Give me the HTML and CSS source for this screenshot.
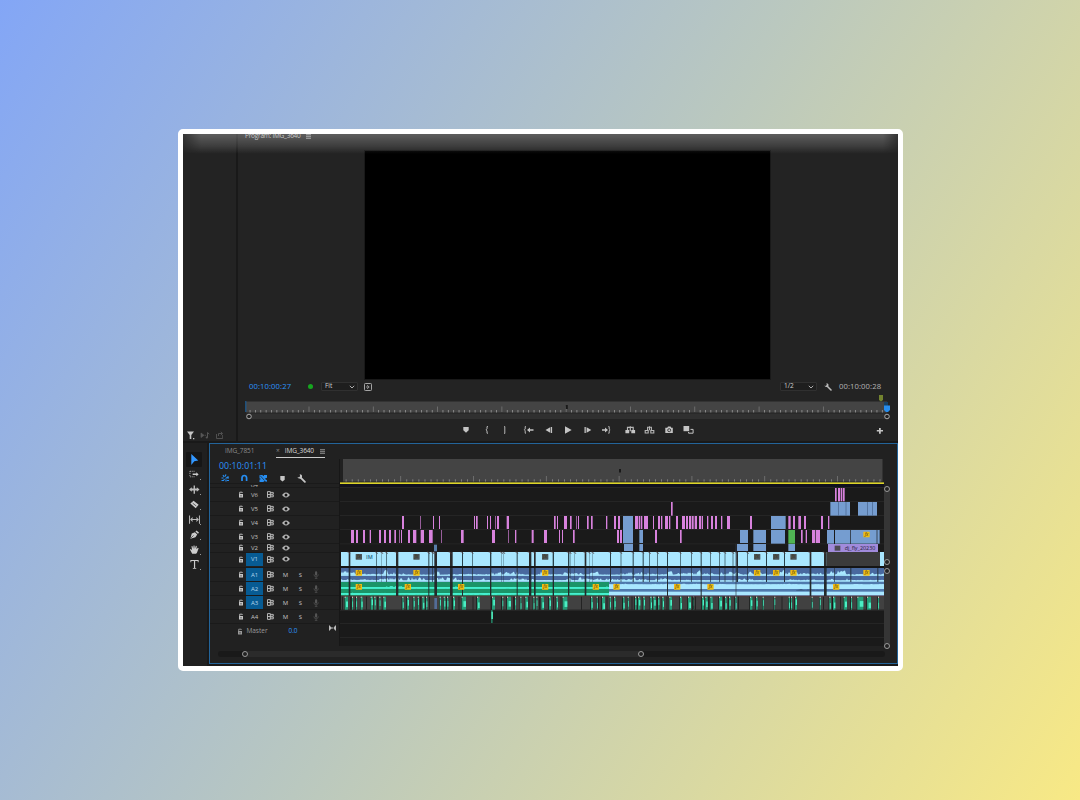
FILE: index.html
```html
<!DOCTYPE html>
<html lang="en">
<head>
<meta charset="utf-8">
<title>Program: IMG_3640</title>
<link rel="stylesheet" href="styles.css">
</head>
<body>
<svg class="defs" aria-hidden="true">
  <symbol id="lock" viewBox="0 0 6 7"><path d="M1 3h4v3.5H1z" fill="currentColor"/><path d="M1.7 3V1.2h2.5V2" fill="none" stroke="currentColor" stroke-width=".9"/><path d="M3 4v1.5" stroke="#222" stroke-width=".7"/></symbol>
  <symbol id="sync" viewBox="0 0 7 7"><path d="M.5.6h2.8v5.8H.5zM.5 3.500h2.8M3.3 1.4h3v1.8h-3M3.3 4h3v1.8h-3" fill="none" stroke="currentColor" stroke-width=".9"/></symbol>
  <symbol id="eye" viewBox="0 0 8 6"><path d="M.4 3Q4-1.4 7.6 3 4 7.4.4 3z" fill="currentColor" stroke="currentColor" stroke-width=".6"/><circle cx="4" cy="3" r="1.500" fill="#181818"/></symbol>
  <symbol id="mic" viewBox="0 0 6 8"><rect x="2" y=".3" width="2.2" height="4.4" rx="1.1" fill="currentColor"/><path d="M.9 3.4Q1 5.8 3.1 5.8T5.3 3.4M3.1 5.8v1.6M1.8 7.4h2.6" fill="none" stroke="currentColor" stroke-width=".7"/></symbol>
  <symbol id="wrench" viewBox="0 0 8 8"><path d="M3 3l4 4" stroke="currentColor" stroke-width="1.6" stroke-linecap="round"/><path d="M2.4.3A2.2 2.2 0 0 1 4.4 3 2.2 2.2 0 0 1 .4 2.6L2 3l.8-1z" fill="currentColor"/></symbol>
  <symbol id="chev" viewBox="0 0 6 4"><path d="M.8.8L3 3 5.2.8" fill="none" stroke="currentColor" stroke-width=".8"/></symbol>
</svg>
<main class="window">
  <section class="upper">
    <aside class="bin">
      <svg width="36" height="9" viewBox="0 0 36 9"><path d="M0 .5h7L4.3 4v4H2.7V4zM6 7h1.3v1.3H6z" fill="#c6c6c6"/><path d="M14 2v4.500L17 4.300zM17.500 4.300h1.500" fill="#565656" stroke="#565656" stroke-width=".7"/><path d="M20.500 6.500V1.500l1.800 1.600" fill="none" stroke="#565656"/><circle cx="19.800" cy="6.500" r="1.100" fill="#565656"/><path d="M29.500 3v4.500h6.200V4M31.500 5V2.500h3.500M33.800.8l1.800 1.700-1.800 1.600" fill="none" stroke="#565656" stroke-width=".9"/></svg>
    </aside>
    <div class="program">
      <header class="program-tab">Program: IMG_3640 <i class="menu"></i></header>
      <div class="monitor"></div>
      <div class="info">
        <span class="tc blue">00:10:00:27</span><i class="dot"></i>
        <span class="select fit">Fit<svg width="6" height="4"><use href="#chev"/></svg></span>
        <svg class="insert" width="8" height="8" viewBox="0 0 8 8"><rect x=".5" y=".5" width="7" height="7" rx=".8" fill="none" stroke="#a5a5a5"/><path d="M3 2.200L5.200 4 3 5.800M2 4h2.500" fill="none" stroke="#bbb" stroke-width=".7"/></svg>
        <span class="select res">1/2<svg width="6" height="4"><use href="#chev"/></svg></span>
        <svg class="wr" width="8" height="8"><use href="#wrench"/></svg>
        <span class="tc grey">00:10:00:28</span>
      </div>
      <svg class="pruler" id="pruler" width="648" height="27" viewBox="243 393 648 27"></svg>
      <div class="transport">
        <svg width="430" height="14" viewBox="460 423 430 14" fill="#c4c4c4" stroke="none">
          <path d="M463.300 427h5.400v3.200l-2.700 2.500-2.700-2.500z"/>
          <path d="M488 426.600h-1v2.300l-1 1 1 1v2.300h1M504 426.600h.8v6.800h-.8M526 426.600h-.8v2.400l-.9.900.9.900v2.400h.8M608.300 426.600h.9v2.400l.9.900-.9.900v2.400h-.9" fill="none" stroke="#b6b6b6" stroke-width="1"/>
          <path d="M527 430l3-2.500v1.800h3.500v1.400H530v1.800zM608 430l-3-2.500v1.800h-3v1.400h3v1.800z"/>
          <path d="M545.500 430l4.700-2.800v5.600zM550.800 427h1.300v6h-1.300zM565 426.300l6.700 3.700-6.700 3.700zM584.500 427h1.300v6h-1.300zM586.600 427.200l4.700 2.800-4.700 2.800z"/>
          <path d="M625.400 430h3.800v3.200h-3.800zM631.300 430h3.800v3.200h-3.800z"/>
          <path d="M627.500 430v-2.700h5.700v2.700M630.300 426.300v5" fill="none" stroke="#b6b6b6" stroke-width="1.200"/>
          <path d="M645.200 430.500h3v2.500h-3zM650.800 430.500h3v2.500h-3zM647.600 430v-2.700h3.800v2.700M649.500 426.200v4" fill="none" stroke="#b6b6b6" stroke-width="1.100"/>
          <path d="M665.300 427.700h2l.7-1.200h2.600l.7 1.200h1.500v5.300h-7.500z"/><circle cx="669.200" cy="430.200" r="1.500" fill="none" stroke="#222" stroke-width=".8"/>
          <path d="M683.500 426h5.700v5.200h-5.700z"/><path d="M690.500 429.400h2.600v3.800h-4.500V432" fill="none" stroke="#c4c4c4" stroke-width="1"/>
          <path d="M879 427.900h1.800v2.100h2.200v1.500h-2.200v2.300H879v-2.300h-2.200v-1.500h2.200z"/>
        </svg>
      </div>
    </div>
  </section>
  <section class="lower">
    <nav class="tools">
      <span class="tool active"><svg width="12" height="12" viewBox="0 0 12 12"><path d="M2.500 0l7.600 7-4.300.8L2.500 12z" fill="#3297ff"/></svg></span>
      <span class="tool"><svg width="12" height="12" viewBox="0 0 12 12"><path d="M1 2.500h6M1 2.500v6h6" fill="none" stroke="#bbb" stroke-dasharray="1 1"/><path d="M4 5h4V3.500L10.500 6 8 8V6.600H4z" fill="#ccc"/></svg></span>
      <span class="tool"><svg width="12" height="12" viewBox="0 0 12 12"><path d="M0 6l3-2.500V5h2V1.500h1.500V5h2V3.500l3 2.500-3 2.500V7h-2v3.500H5V7H3v1.500z" fill="#bbb"/></svg></span>
      <span class="tool"><svg width="12" height="12" viewBox="0 0 12 12"><path d="M1.500 4.800L5 1.800l5.500 4.500L7.300 10z" fill="#ccc"/><path d="M4 4.500l4 3.200" stroke="#333" stroke-width=".8"/></svg></span>
      <span class="tool"><svg width="12" height="12" viewBox="0 0 12 12"><path d="M.6 1.500v9M11.400 1.500v9M2 6h8M4 4L2 6l2 2M8 4l2 2-2 2" fill="none" stroke="#bbb" stroke-width="1.100"/></svg></span>
      <span class="tool"><svg width="12" height="12" viewBox="0 0 12 12"><path d="M1.500 10.500L3 5l3.500-1.500L9 6l-2 3zM7 2.800L8.300 1.500 11 4 9.700 5.300z" fill="#ccc"/><path d="M2 10l3-3" stroke="#222" stroke-width=".7"/></svg></span>
      <span class="tool"><svg width="12" height="12" viewBox="0 0 12 12"><path d="M3.500 10.500L1 6l1-.6 1.400 1.300L2.700 2.500l1-.2.900 3L5 1.500h1l.4 3.600L7.500 2l1 .3-.4 3.500L9.700 4l.8.500-1.800 5-1 1z" fill="#ccc"/></svg></span>
      <span class="tool"><svg width="12" height="12" viewBox="0 0 12 12"><path d="M1.500 1h9v2.500h-1V2.200H6.700v7.500h1.200v.8H4.200v-.8h1.200V2.200H2.500v1.300h-1z" fill="#ccc"/></svg></span>
    </nav>
    <div class="timeline">
      <header class="tabs"><span class="tab">IMG_7851</span><span class="tab current"><b>×</b>IMG_3640<i class="menu"></i></span></header>
      <div class="body">
        <div class="heads">
          <div class="tc seq">00:10:01:11</div>
          <svg class="opts" width="90" height="12" viewBox="218 472 90 12">
            <path d="M221.500 480.500h2l1-1.500M221.500 478h2M226 474.500l-1 2M223 475l1.200 2M228.500 476.500l-2 1.500h2.500M226 479.500v2M227 480.500h2" fill="none" stroke="#268df1" stroke-width="1.200"/>
            <path d="M242 481v-3.200q.2-2.300 2.300-2.300t2.300 2.300v3.200" fill="none" stroke="#268df1" stroke-width="1.700"/>
            <path d="M259.500 475h3.300v1h1v-1h3.200v2.800l-2.300 1 2.300 1.500v1.500l-3.200-.8v1h-4.300v-2.500h1v-1h-1z" fill="#268df1"/><path d="M260 475.500l4.500 5" stroke="#222" stroke-width=".7"/>
            <path d="M280.300 476h4.400v3.700l-2.200 1.800-2.200-1.800z" fill="#c6c6c6"/>
            <use href="#wrench" x="297" y="474" width="9" height="9" color="#c6c6c6"/>
          </svg>
          <div id="heads"></div>
        </div>
        <div class="lanes">
          <svg id="truler" width="546" height="25" viewBox="340 459 546 25"></svg>
          <svg id="tracks" width="546" height="162" viewBox="0 0 1638 486"></svg>
        </div>
        <div class="vbars"><i class="vbar v"></i><i class="vbar a"></i></div>
      </div>
      <div class="hscroll"><i class="thumb"></i></div>
    </div>
  </section>
</main>
<script src="timeline.js"></script>
</body>
</html>
```
FILE: styles.css
```css
*, *::before, *::after { box-sizing: border-box; }
body { margin: 0; width: 1080px; height: 800px; padding: 129px 0 0 178px; overflow: hidden; background: linear-gradient(122deg, #83a6f6 0%, #bac8bf 50%, #f8e985 100%); font: 500 6.5px/1 "Open Sans", "Noto Sans", sans-serif; color: #c4c4c4; }
svg { display: block; flex: none; }
.defs { position: absolute; width: 0; height: 0; }
.window { position: relative; width: 725px; height: 542px; border: 5px solid #fff; border-radius: 5px; background: #191919; overflow: hidden; }
.window::after { content: ""; position: absolute; inset: 0; pointer-events: none; background: linear-gradient(rgba(255,255,255,.27), rgba(255,255,255,.12) 12px, transparent 20px); mask-image: linear-gradient(90deg, rgba(0,0,0,.3), #000 18px, #000 700px, rgba(0,0,0,.3)); }
.upper { display: flex; height: 307px; background: #232323; }
.bin { display: flex; align-items: flex-end; width: 55px; padding: 0 0 1px 3.500px; border-right: 2px solid #191919; }
.program { width: 660px; }
.program-tab { display: flex; height: 16px; padding-left: 7px; font-size: 6.500px; line-height: 4px; letter-spacing: -.25px; color: #bbb; }
.menu { display: inline-block; width: 5px; height: 5px; margin-left: 5px; background: repeating-linear-gradient(#777 0 1px, #444 1px 2px); }
.monitor { width: 407px; height: 230px; margin-left: 126px; background: #000; border: 1px solid #191919; }
.info { display: flex; align-items: center; height: 13px; padding-left: 11px; }
.tc { font-size: 7.700px; letter-spacing: .08px; white-space: nowrap; }
.blue { width: 59px; color: #2b94fb; }
.dot { width: 5px; height: 5px; border-radius: 50%; background: #16a51f; margin-right: 8px; }
.select { display: flex; align-items: center; justify-content: space-between; height: 9px; padding: 0 2px 0 3px; border: 1px solid #303030; border-radius: 1px; background: #1e1e1e; color: #d0d0d0; font-size: 6.5px; }
.fit { width: 37px; margin-right: 6px; }
.res { width: 37px; margin-left: 408px; }
.wr { margin: 0 7px; color: #bbb; }
.grey { color: #b4b4b4; }
.pruler { margin-left: 5px; }
.transport { padding: 3px 0 0 222px; }
.lower { display: flex; height: 225px; margin-top: 2px; }
.tools { width: 24px; padding: 9px 0 0 3px; background: #202020; }
.tool { position: relative; display: flex; align-items: center; justify-content: center; width: 16px; height: 15px; }
.tool svg { width: 11px; height: 11px; }
.tool.active { background: #161616; border-radius: 1px; }
.tool:not(.active)::after { content: ""; position: absolute; right: 1px; bottom: 2px; width: 1px; height: 1px; background: #999; }
.timeline { width: 689px; height: 221px; margin-left: 2px; border: 1px solid #23649a; background: #212121; }
.tabs { display: flex; height: 15px; padding: 2px 0 0 15px; }
.tab { height: 12px; line-height: 10px; color: #8b8b8b; width: 51px; letter-spacing: -.1px; }
.current { display: flex; width: 49px; color: #d8d8d8; border-bottom: 1px solid #ccc; }
.current b { width: 10px; color: #888; font-weight: 400; }
.current .menu { margin: 3px 0 0 6px; flex: none; }
.body { display: flex; height: 187px; }
.heads { width: 130px; height: 187px; border-right: 1px solid #171717; }
.seq { height: 13px; padding: 3px 0 0 9px; color: #2b94fb; font-size: 8.800px; }
.opts { margin-left: 8px; }
#heads { margin-top: -1px; }
.row { display: grid; grid-template-columns: 25px 11px 17px 15px 15px 15px 15px; align-items: center; height: 14px; border-top: 1px solid #1a1a1a; color: #c4c4c4; font-size: 6px; }
.row svg { justify-self: center; }
.row span { align-self: stretch; display: flex; align-items: center; justify-content: center; }
.row .on { background: #075b93; color: #b5d7ee; }
.row .mic { color: #555; }
.row:first-child { height: 4px; overflow: hidden; align-items: end; }
.short { height: 8.500px; }
.v1 { height: 14.500px; margin-bottom: 1px; }
.master { grid-template-columns: 25px 10px 24px 48px 9px 13px; padding-top: 1px; color: #999; font-size: 6.500px; }
.master svg:last-child { margin-top: -6px; }
.master .gain { color: #2b94fb; }
.lanes { width: 544px; background: #1b1b1b; overflow: hidden; }
.vbars { width: 7px; padding: 27px 0 0 0; }
.vbar { display: block; position: relative; width: 6px; height: 79px; margin-bottom: 3px; border-radius: 3px; background: #353535; }
.vbar::before, .vbar::after, .thumb::before, .thumb::after { content: ""; position: absolute; width: 6px; height: 6px; border: 1.500px solid #999; border-radius: 50%; background: #222; }
.vbar::before { top: 0; }
.vbar::after { bottom: 0; }
.vbar.a { height: 81px; }
.hscroll { height: 6px; width: 667px; margin: 5px 0 0 8px; padding-left: 24px; border-radius: 3px; background: #191919; }
.thumb { display: block; position: relative; width: 402px; height: 6px; border-radius: 3px; background: #2b2b2b; }
.thumb::before { left: 0; }
.thumb::after { right: 0; }
```
FILE: timeline.js
```js
const rect = (x, y, w, h, f, extra = "") => `<rect x="${x}" y="${y}" width="${w}" height="${h}" fill="${f}" ${extra}/>`;
const icon = (id, w, h, cls = "") => `<svg class="${cls}" width="${w}" height="${h}"><use href="#${id}"/></svg>`;

// Track headers
const names = ["V7", "V6", "V5", "V4", "V3", "V2", "V1", "A1", "A2", "A3", "A4"];
document.getElementById("heads").innerHTML = names.map(n => {
  const on = ["V1", "A1", "A2", "A3"].includes(n) ? "on" : "";
  const cls = n === "V1" ? "v1" : n === "V2" ? "short" : "";
  if (n === "V7") return `<div class="row"><i></i><i></i><span>V7</span></div>`;
  return `<div class="row ${cls}"><i></i>${icon("lock", 6, 7)}<span class="${on}">${n}</span>${icon("sync", 7, 7)}` +
    (n[0] === "V" ? icon("eye", 8, 6) : `<span>M</span><span>S</span>${icon("mic", 6, 8, "mic")}`) + `</div>`;
}).join("") + `<div class="row master"><i></i>${icon("lock", 6, 7)}<span>Master</span><span class="gain">0.0</span><i></i><svg width="7" height="6"><path d="M0 0l3 3-3 3zM7 0L4 3l3 3zM2 2.500h3v1H2z" fill="#bbb"/></svg></div>`;

// Program ruler
let s = rect(246, 402, 641, 10.5, "#444") + rect(246, 401, 641, 1, "#333") + rect(246, 413.5, 641, 5.5, "#303030");
for (let i = 1; i < 120; i++) {
  const x = 244.3 + i * 5.358, major = i % 12 === 0;
  if (x < 884) s += rect(x, major ? 406.5 : 410, .8, major ? 5.5 : 2.5, major ? "#777" : "#999");
}
s += rect(245.3, 401, 1, 11, "#1c65a5") + rect(565.8, 405, 2, 4, "#191919") + rect(884, 402, 4, 5, "#164164");
s += `<circle cx="249" cy="416.500" r="2.300" fill="#222" stroke="#aaa"/><circle cx="887" cy="416.500" r="2.300" fill="#222" stroke="#aaa"/>`;
s += `<path d="M879 395h4v5l-2 1.500-2-1.500z" fill="#73832f"/><path d="M884 405.500h6v4.500l-2 2h-2l-2-2z" fill="#278eee"/>`;
document.getElementById("pruler").innerHTML = s;

// Sequence ruler
s = rect(340, 459, 546, 26, "#212121") + rect(343, 459, 539.5, 22, "#444") + rect(343, 481, 539.5, 1.5, "#353535");
for (let i = 3; i < 92; i++) {
  const x = 327.500 + i * 6.067, major = i % 12 === 0;
  s += rect(x, major ? 476 : 479.3, .8, major ? 5.5 : 2.3, major ? "#777" : "#8b8b8b");
}
s += rect(619, 469, 2, 3.5, "#191919") + rect(340, 482.4, 544, 1.600, "#dcd42b");
document.getElementById("truler").innerHTML = s;

// Clips: three units per pixel; each list holds "start-end" ranges after an offset
const C = { pink: "#d882dd", blue: "#759dd0", cyan: "#a9e7ff" };
s = rect(0, 0, 1638, 486, "#1a1a1a") + rect(0, 0, 1638, 9, "#11111d");
[9, 51, 93, 135, 178, 378, 417, 459].forEach(y => s += rect(0, y, 1638, 3, "#252525"));
const clips = (list, off, y, h, f) => list.split(",").forEach(r => {
  const [a, b] = r.split("-").map(Number);
  s += rect(off + a, y, b - a, h, f);
});
clips("186-192,240-242,279-282,297-300,402-405,408-413", 0, 96, 39, C.pink);
clips("33-42,48-54,69-75,89-93,117-123,132-138,147-153,163-168,178-180,183-186,204-210,219-229,242-252,267-278,303-305,363-371", 0, 138, 39, C.pink);
clips("21-24,30-33,45-47,51-57,80-87,222-227,231-234,252-261,270-275,288-290,294-297,321-326,333-338,378-382,402-408,414-420", 420, 96, 39, C.pink);
clips("36-45,85-87,105-109,155-161,192-201,237-240,246-249,279-284,411-417", 420, 138, 39, C.pink);
clips("153-158", 840, 54, 41, C.pink);
clips("45-54,56-60,62-67,72-84,99-102,114-120,123-127,135-144,147-151,168-174,186-195,198-204,207-214,216-221,224-231,237-243,245-249,261-265,273-279,285-291,303-307,321-330,390-396", 840, 96, 39, C.pink);
clips("0-6,105-111,180-185", 840, 138, 39, C.pink);
clips("225-230,234-240,242-246,248-254", 1260, 12, 40, C.pink);
clips("85-92,99-105,115-123,132-138,183-189,204-208", 1260, 96, 39, C.pink);
clips("123-128,137-141,156-166,168-180", 1260, 138, 39, C.pink);
clips("211-270,294-351", 1260, 54, 41, C.blue);
clips("235-237,257-259,321-323,337-339", 1260, 54, 41, "#46648c");
clips("9-39", 840, 96, 82, C.blue);
clips("58-69,360-384,400-438", 840, 138, 39, C.blue);
clips("12-39,58-69,351-384,400-438", 840, 180, 21, C.blue);
clips("33-77", 1260, 96, 39, C.blue);
clips("33-75,201-222,225-270,272-350,352-359", 1260, 138, 41, C.blue);
clips("85-105", 1260, 138, 41, "#50b453");
clips("85-105", 1260, 180, 21, C.blue);
s += rect(1464, 180, 150, 24, "#a18bdc") + rect(1484, 185, 17, 15, "#4d4a52");
s += `<text x="1514" y="199" font-size="17" fill="#211b35" textLength="92" lengthAdjust="spacingAndGlyphs">dj_fly_20230</text>`;

// Deterministic noise for waveforms
let seed = 7;
const rnd = () => (seed = (seed * 16807) % 2147483647) / 2147483647;
const wave = (x0, x1, base, amp, f) => {
  let d = `M${x0} ${base}`, level = .5;
  for (let x = x0; x <= x1; x += 3) {
    if (rnd() < .12) level = rnd();
    d += `L${x} ${(base - amp * (.15 + .85 * level * rnd())).toFixed(1)}`;
  }
  s += `<path d="${d}L${x1} ${base}z" fill="${f}"/>`;
};

// V1, A1, A2, A3 lanes
s += rect(3, 204, 1629, 42, C.cyan) + rect(3, 252, 1629, 42, "#49699f");
wave(3, 1632, 276, 19, C.cyan); wave(3, 1632, 292, 13, C.cyan);
s += rect(3, 272, 1629, 4, "#9bd8f4") + rect(3, 289, 1629, 4, C.cyan);
s += rect(3, 294, 804, 42, "#1b9468") + rect(807, 294, 825, 42, "#4f79ad");
wave(3, 807, 314, 9, "#45f0cf"); wave(3, 807, 333, 8, "#45f0cf");
s += rect(3, 309, 804, 5, "#45f0cf") + rect(3, 327, 804, 5, "#45f0cf");
s += rect(807, 301, 825, 14, C.cyan) + rect(807, 323, 825, 11, C.cyan);
wave(807, 1632, 303, 5, C.cyan);
s += rect(3, 336, 1629, 41, "#414141") + rect(3, 335, 1629, 2, "#6b3034");
const cuts = [[26,5],[109,2],[125,1],[139,2],[168,7],[265,3],[277,2],[283,8],[330,8],[366,3],[396,2],[450,4],[484,1],[491,1],[530,3],[567,7],[582,5],[638,4],[684,4],[690,1],[704,1],[734,5],[747,1],[758,1],[810,3],[842,2],[878,3],[908,3],[928,2],[952,2],[981,3],[1020,2],[1054,2],[1082,3],[1110,2],[1137,2],[1154,2],[1178,2],[1189,5],[1222,2],[1278,3],[1332,3],[1409,5],[1452,8]];
cuts.forEach(([x, w]) => {
  s += rect(x, 204, w, 42, w > 4 ? "#292b2d" : "#28414a") + rect(x, 252, w, 42, "#25303d");
  if (w > 2 && x < 810 || [981,1082,1409,1452].includes(x)) s += rect(x, 294, w, 42, "#252a2b");
  s += `<path d="M${x - 4} 204h4l4 6" stroke="#543c3c" stroke-width="2" fill="none"/>`;
});
s += rect(1460, 204, 160, 42, "#3b3b3b");
s += rect(0, 246, 1638, 6, "#151515") + rect(1482, 252, 2, 42, "#243441") + rect(1531, 252, 3, 42, "#243441") + rect(1612, 252, 3, 42, "#243441");
[[1368, 42], [1416, 35]].forEach(([x, w]) => wave(x, x + w, 320, 7, "#3c5a83"));

// Dense short clips on A3
const short = (list, off) => list.split(",").forEach(r => {
  const [a, b] = r.split("-").map(Number), x = off + a, w = b - a;
  s += rect(x - 2, 338, 2, 39, "#161a19") + rect(x, 338, w, 39, "#249c78");
  s += rect(x + w * .4, 346 + rnd() * 12, Math.max(2, w * .6), 17, "#4beec4") + rect(x, 338, 3, 4, "#d2b7b7");
});
short("14-24,36-39,48-51,62-68,92-99,103-107,118-121,130-138,187-191,201-207,220-224,233-237,247-253,258-262,299-303,311-316,321-325,339-345,365-378,411-419", 0);
short("36-45,67-69,81-93,105-108,121-124,136-144,160-163,169-172,184-192,207-213,229-234,248-262,333-338,350-353,366-375,389-393,402-407", 420);
short("8-14,23-26,45-49,54-61,70-75,91-96,100-107,114-118,127-132,148-156,180-186,204-213,219-222,246-252,256-263,271-278,297-306,315-320,327-332,345-351,390-397,408-413", 840);
short("8-11,43-45,86-90,93-96,105-111,155-157,179-182,208-212,219-226,251-261,273-276,292-310,321-333,354-357", 1260);
[6, 31, 78, 111, 240, 268, 335, 356, 398, 452, 484, 520, 566, 598, 640, 662, 724, 775, 800, 846, 875, 950, 980, 1060, 1066, 1105, 1150, 1194, 1325, 1450, 1476, 1500].forEach(x => s += rect(x, 338, 2, 39, "#161616"));
s += rect(453, 378, 5, 39, "#23795f") + rect(454, 383, 5, 22, "#4ce0b4") + rect(282, 182, 9, 20, "#587da9");
s += rect(283, 342, 8, 33, "#536d98") + rect(1187, 180, 2, 197, "#333a45");
s += `<text x="78" y="224" font-size="18" font-weight="600" fill="#1c6682" textLength="20" lengthAdjust="spacingAndGlyphs">IM</text>`;

// Effect badges
const badge = (x, y, f) => s += rect(x, y, 19, 17, f, 'rx="1"') + `<text x="${x + 4}" y="${y + 13}" font-size="14" font-style="italic" fill="#3b3213">fx</text>`;
[47, 220, 606, 1242, 1299, 1351].forEach(x => badge(x, 210, "#4b5558"));
[47, 220, 606, 1242, 1299, 1351, 1570].forEach(x => badge(x, 258, "#f0bd12"));
[47, 194, 354, 606, 758, 820, 1002, 1102, 1479].forEach(x => badge(x, 300, "#f0bd12"));
badge(1570, 143, "#f0bd12");
document.getElementById("tracks").innerHTML = s;
```
